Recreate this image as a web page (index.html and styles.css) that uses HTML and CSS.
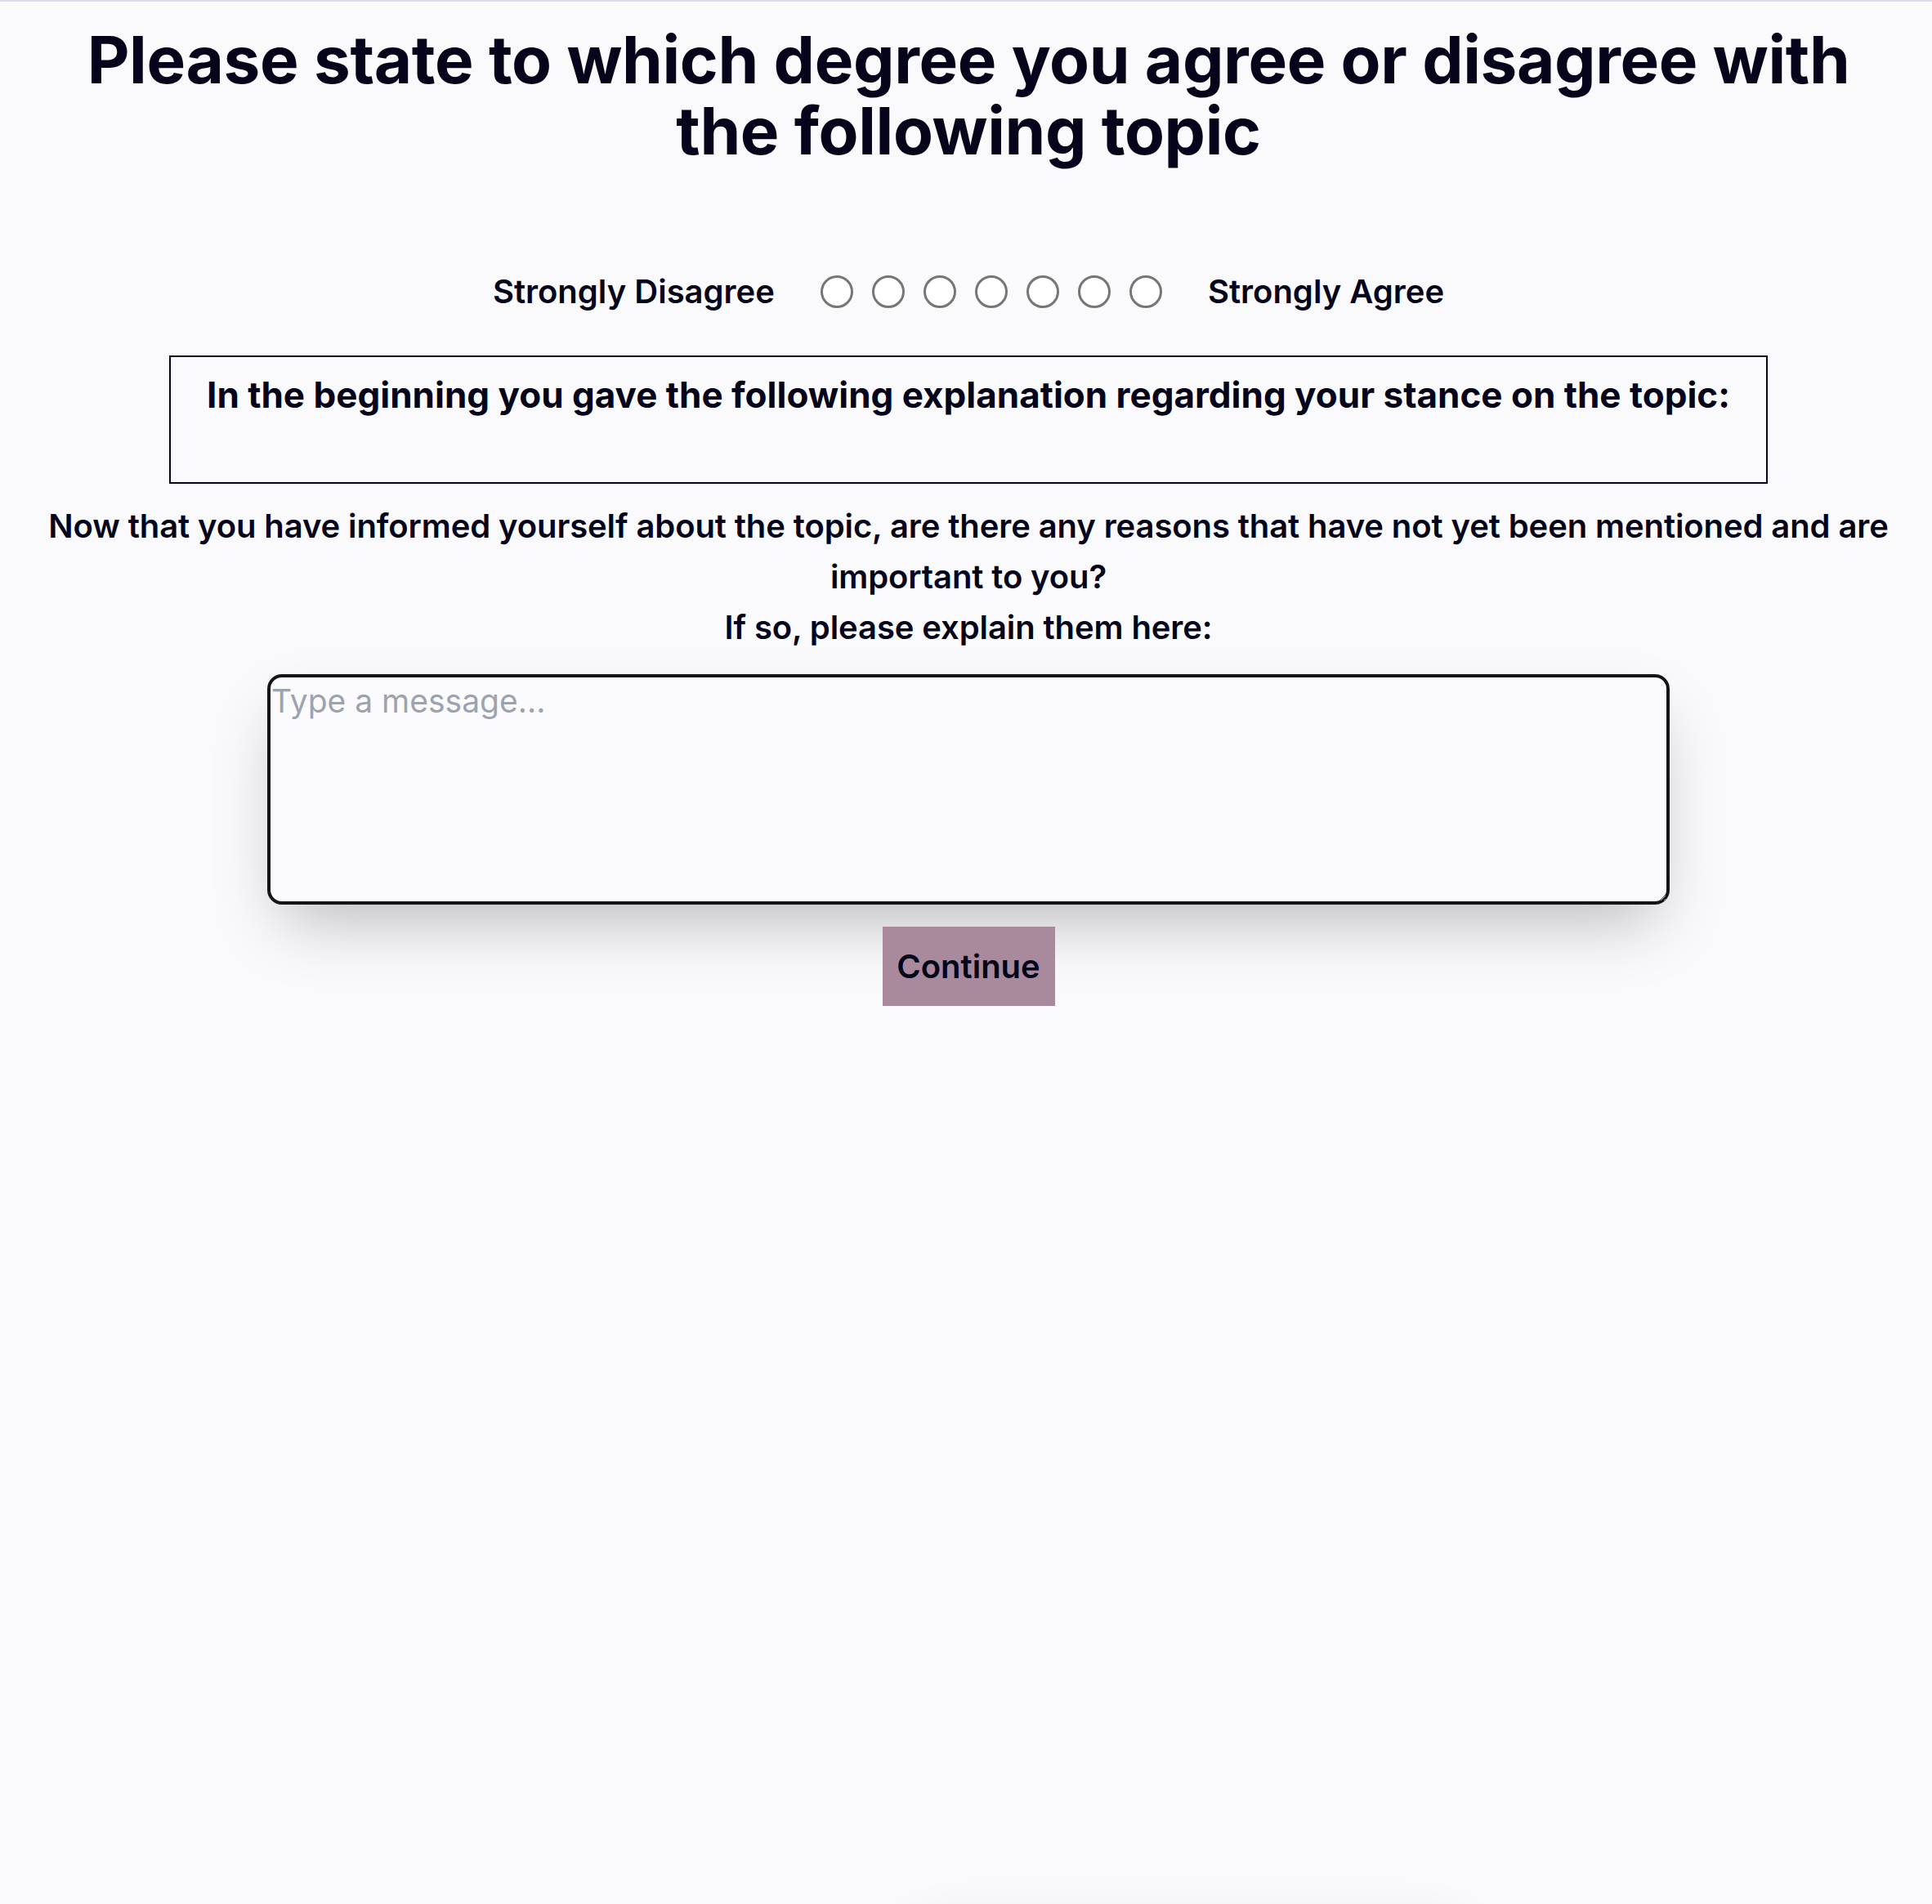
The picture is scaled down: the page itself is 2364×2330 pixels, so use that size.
FILE: index.html
```html
<!DOCTYPE html>
<html lang="en">
<head>
<meta charset="utf-8">
<title>Survey</title>
<link rel="stylesheet" href="styles.css">
</head>
<body>
<main class="page">
  <h1 class="title">Please state to which degree you agree or disagree with the following topic</h1>

  <div class="likert">
    <span class="likert-label">Strongly Disagree</span>
    <div class="likert-options">
      <input type="radio" name="stance" class="radio" value="1">
      <input type="radio" name="stance" class="radio" value="2">
      <input type="radio" name="stance" class="radio" value="3">
      <input type="radio" name="stance" class="radio" value="4">
      <input type="radio" name="stance" class="radio" value="5">
      <input type="radio" name="stance" class="radio" value="6">
      <input type="radio" name="stance" class="radio" value="7">
    </div>
    <span class="likert-label">Strongly Agree</span>
  </div>

  <section class="explanation">
    <h2 class="explanation-title">In the beginning you gave the following explanation regarding your stance on the topic:</h2>
    <p class="explanation-text"></p>
  </section>

  <p class="prompt">Now that you have informed yourself about the topic, are there any reasons that have not yet been mentioned and are important to you?<br>If so, please explain them here:</p>

  <textarea class="message" placeholder="Type a message..."></textarea>

  <button class="continue" type="button">Continue</button>
</main>
<div class="floating-shadow"></div>
</body>
</html>
```

FILE: styles.css
```css
html, body {
  margin: 0;
  padding: 0;
}

body {
  background: #fafafc;
  border-top: 2px solid #dcd9e8;
  font-family: "Inter", "Noto Sans", sans-serif;
  color: #05041a;
  min-height: 2328px;
  overflow: hidden;
}

.page {
  display: flex;
  flex-direction: column;
  align-items: center;
  text-align: center;
  padding-left: 6px;
}

.title {
  margin: 27px 0 0;
  font-size: 80px;
  line-height: 87px;
  font-weight: 700;
  letter-spacing: -0.35px;
  max-width: 2220px;
}

.likert {
  margin-top: 130px;
  display: flex;
  align-items: center;
  gap: 56px;
}

.likert-label {
  font-size: 40px;
  font-weight: 600;
  line-height: 48px;
}

.likert-options {
  display: flex;
  gap: 23px;
}

.radio {
  appearance: none;
  -webkit-appearance: none;
  margin: 0;
  width: 40px;
  height: 40px;
  border: 3px solid #767676;
  border-radius: 50%;
  background: #ffffff;
}

.explanation {
  margin-top: 54px;
  width: 1956px;
  box-sizing: border-box;
  border: 2px solid #05041a;
  padding: 20px 20px 0;
  height: 157px;
}

.explanation-title {
  margin: 0;
  font-size: 44px;
  line-height: 52px;
  font-weight: 700;
}

.explanation-text {
  margin: 0;
}

.prompt {
  margin: 21px 0 0;
  font-size: 40px;
  line-height: 62px;
  font-weight: 600;
  letter-spacing: -0.1px;
  max-width: 2300px;
}

.message {
  margin-top: 26px;
  width: 1716px;
  height: 282px;
  box-sizing: border-box;
  border: 4px solid #151515;
  border-radius: 18px;
  background: #fbfbfd;
  padding: 5px 1px;
  font-family: "Inter", "Noto Sans", sans-serif;
  font-size: 39px;
  line-height: 48px;
  color: #05041a;
  box-shadow: 0 37px 75px -18px rgba(0, 0, 0, 0.25);
  outline: none;
}

.message::placeholder {
  color: #9ca3af;
}

.continue {
  margin-top: 27px;
  width: 211px;
  height: 97px;
  border: none;
  border-radius: 0;
  background: #a98a9d;
  color: #05041a;
  font-family: "Inter", "Noto Sans", sans-serif;
  font-size: 40px;
  font-weight: 600;
  padding: 0;
}

.floating-shadow {
  position: fixed;
  left: 1100px;
  bottom: -140px;
  width: 710px;
  height: 120px;
  border-radius: 60px;
  background: #fafafc;
  box-shadow: 0 0 60px rgba(0, 0, 0, 0.08);
}
```
